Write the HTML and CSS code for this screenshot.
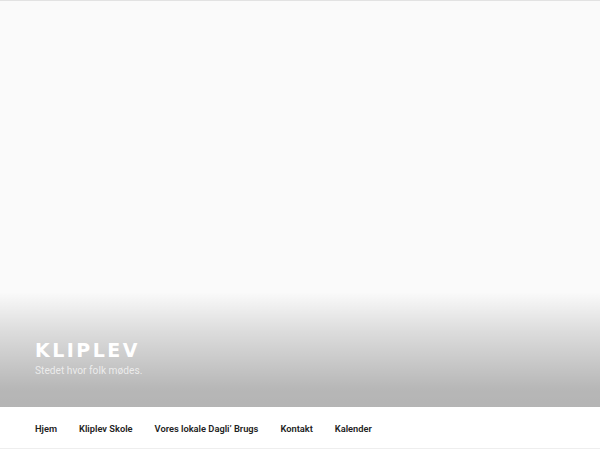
FILE: index.html
```html
<!DOCTYPE html>
<html lang="da">
<head>
<meta charset="utf-8">
<title>Kliplev</title>
<link rel="stylesheet" href="styles.css">
</head>
<body>
<header class="site-header">
  <div class="header-media">
    <div class="branding">
      <div class="site-title">KLIPLEV</div>
      <div class="site-description">Stedet hvor folk mødes.</div>
    </div>
  </div>
  <nav class="main-nav">
    <ul class="menu">
      <li><a href="#">Hjem</a></li>
      <li><a href="#">Kliplev Skole</a></li>
      <li><a href="#">Vores lokale Dagli’ Brugs</a></li>
      <li><a href="#">Kontakt</a></li>
      <li><a href="#">Kalender</a></li>
    </ul>
  </nav>
</header>
</body>
</html>
```
FILE: styles.css
```css
html, body {
  margin: 0;
  padding: 0;
  background: #fff;
  font-family: Roboto, "Liberation Sans", sans-serif;
}
.site-header {
  display: flex;
  flex-direction: column;
}
.header-media {
  height: 406px;
  border-top: 1px solid #e2e2e2;
  background:
    linear-gradient(to bottom, rgba(0,0,0,0) 0%, rgba(0,0,0,0.12) 35%, rgba(0,0,0,0.27) 85%, rgba(0,0,0,0.28) 100%) bottom / 100% 115px no-repeat,
    #fafafa;
  display: flex;
  flex-direction: column;
  justify-content: flex-end;
}
.branding {
  padding: 0 35px 29px;
}
.site-title {
  color: #fff;
  font-family: "DejaVu Sans", sans-serif;
  font-weight: 700;
  font-size: 19px;
  letter-spacing: 0.13em;
  line-height: 22px;
}
.site-description {
  color: rgba(255,255,255,0.7);
  font-size: 10.2px;
  line-height: 14px;
  margin-top: 3px;
}
.main-nav {
  height: 41px;
  border-bottom: 1px solid #eeeeee;
  background: #fff;
  display: flex;
  align-items: center;
}
.menu {
  list-style: none;
  margin: 0 0 2px;
  padding: 0 35px;
  display: flex;
  gap: 22px;
}
.menu a {
  color: #222;
  text-decoration: none;
  font-size: 9.3px;
  font-weight: 600;
}
```
